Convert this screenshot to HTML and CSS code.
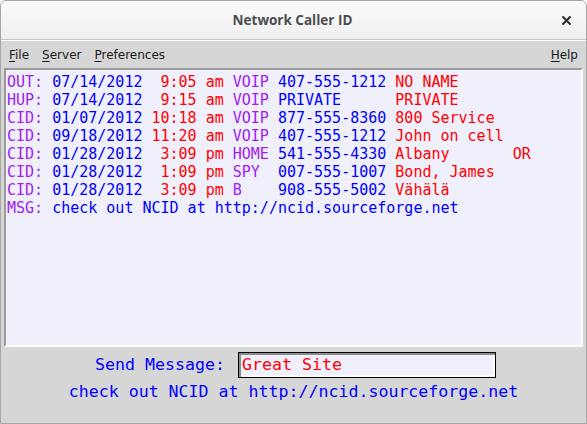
FILE: index.html
```html
<!DOCTYPE html>
<html>
<head>
<meta charset="utf-8">
<link rel="stylesheet" href="styles.css">
</head>
<body>
<div class="window">
  <div class="titlebar">
    <div class="title">Network Caller ID</div>
    <div class="close">
      <svg width="9" height="9" viewBox="0 0 9 9"><path d="M1.2 1.2 L7.8 7.8 M7.8 1.2 L1.2 7.8" stroke="#2e3436" stroke-width="2.2" stroke-linecap="square"/></svg>
    </div>
  </div>
  <div class="menubar">
    <span class="menu"><u>F</u>ile</span>
    <span class="menu"><u>S</u>erver</span>
    <span class="menu"><u>P</u>references</span>
    <span class="spacer"></span>
    <span class="menu"><u>H</u>elp</span>
  </div>
  <div class="log">
    <div class="line"><span class="p">OUT: </span><span class="b">07/14/2012 </span><span class="r"> 9:05 am </span><span class="p">VOIP </span><span class="b">407-555-1212 </span><span class="r">NO NAME</span></div>
    <div class="line"><span class="p">HUP: </span><span class="b">07/14/2012 </span><span class="r"> 9:15 am </span><span class="p">VOIP </span><span class="b">PRIVATE      </span><span class="r">PRIVATE</span></div>
    <div class="line"><span class="p">CID: </span><span class="b">01/07/2012 </span><span class="r">10:18 am </span><span class="p">VOIP </span><span class="b">877-555-8360 </span><span class="r">800 Service</span></div>
    <div class="line"><span class="p">CID: </span><span class="b">09/18/2012 </span><span class="r">11:20 am </span><span class="p">VOIP </span><span class="b">407-555-1212 </span><span class="r">John on cell</span></div>
    <div class="line"><span class="p">CID: </span><span class="b">01/28/2012 </span><span class="r"> 3:09 pm </span><span class="p">HOME </span><span class="b">541-555-4330 </span><span class="r">Albany       OR</span></div>
    <div class="line"><span class="p">CID: </span><span class="b">01/28/2012 </span><span class="r"> 1:09 pm </span><span class="p">SPY  </span><span class="b">007-555-1007 </span><span class="r">Bond, James</span></div>
    <div class="line"><span class="p">CID: </span><span class="b">01/28/2012 </span><span class="r"> 3:09 pm </span><span class="p">B    </span><span class="b">908-555-5002 </span><span class="r">Vähälä</span></div>
    <div class="line"><span class="p">MSG: </span><span class="b">check out NCID at http://ncid.sourceforge.net</span></div>
  </div>
  <div class="sendrow">
    <span class="sendlabel">Send Message:</span>
    <div class="entry">Great Site</div>
  </div>
  <div class="status">check out NCID at http://ncid.sourceforge.net</div>
</div>
</body>
</html>
```
FILE: styles.css
```css
html, body {
  margin: 0;
  padding: 0;
  background: #ffffff;
}
.window {
  width: 587px;
  height: 424px;
  box-sizing: border-box;
  border: 1px solid #a6a6a6;
  border-radius: 6px 6px 0 0;
  background: #d6d6d6;
  display: flex;
  flex-direction: column;
  overflow: hidden;
}
.titlebar {
  height: 38px;
  flex: none;
  border-bottom: 1px solid #c4c4c4;
  background: linear-gradient(#fbfbfb, #efefef);
  display: flex;
  align-items: center;
  justify-content: center;
  position: relative;
}
.title {
  font-family: "Open Sans", sans-serif;
  font-weight: bold;
  font-size: 13.5px;
  color: #4a4e50;
  margin-left: -2px;
}
.close {
  position: absolute;
  right: 15px;
  top: 15px;
  width: 9px;
  height: 9px;
  display: flex;
}
.menubar {
  height: 27px;
  flex: none;
  display: flex;
  align-items: center;
  padding: 0 8px 0 8px;
  gap: 13px;
  font-family: "DejaVu Sans", sans-serif;
  font-size: 12px;
  color: #1a1a1a;
  border-top: 1px solid #ffffff;
}
.menu u {
  text-decoration-thickness: 1px;
  text-underline-offset: 2px;
}
.spacer {
  flex: 1;
}
.log {
  flex: none;
  height: 279px;
  margin: 0 3px;
  box-sizing: border-box;
  border-top: 2px solid #9a9a9a;
  border-left: 2px solid #9a9a9a;
  border-right: 2px solid #ffffff;
  border-bottom: 2px solid #ffffff;
  background: #f0f0fc;
  padding: 3px 1px;
  font-family: "DejaVu Sans Mono", monospace;
  font-size: 15px;
  line-height: 18px;
}
.line {
  white-space: pre;
  height: 18px;
}
.p { color: #a020f0; }
.b { color: #0000ff; }
.r { color: #ff0000; }
.sendrow {
  flex: none;
  display: flex;
  align-items: center;
  padding-left: 94px;
  margin-top: 4px;
  height: 27px;
  font-family: "DejaVu Sans Mono", monospace;
  font-size: 16.6px;
}
.sendlabel {
  color: #0000ff;
  width: 143px;
}
.entry {
  width: 258px;
  height: 26px;
  box-sizing: border-box;
  border: 1px solid #000000;
  box-shadow: inset 2px 2px 0 #8c8c8c, inset -2px -2px 0 #ffffff;
  background: #f0f0fc;
  color: #ff0000;
  padding: 1px 0 0 3px;
  line-height: 22px;
}
.status {
  flex: none;
  margin-top: 3px;
  text-align: center;
  font-family: "DejaVu Sans Mono", monospace;
  font-size: 16.6px;
  line-height: 22px;
  color: #0000ff;
}
```
